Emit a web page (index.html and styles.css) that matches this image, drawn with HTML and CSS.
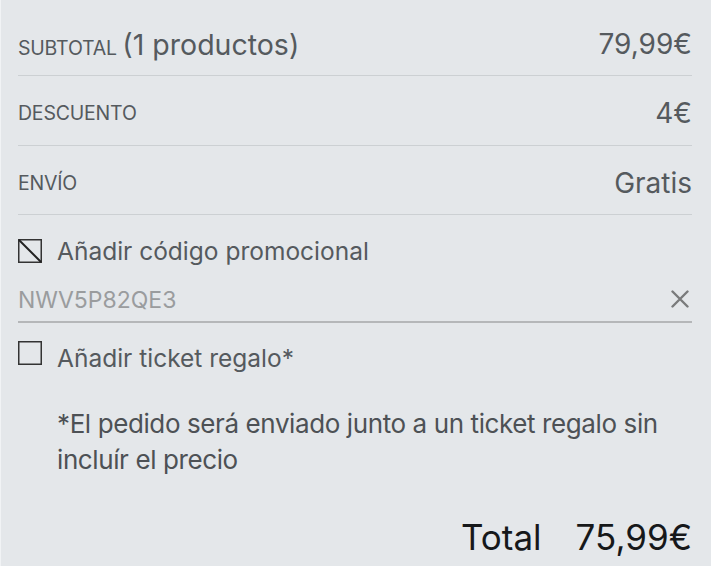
FILE: index.html
```html
<!DOCTYPE html>
<html lang="es">
<head>
<meta charset="utf-8">
<link rel="stylesheet" href="styles.css">
</head>
<body>
<div class="summary">
  <div class="row row-1">
    <span class="label"><span class="caps">SUBTOTAL</span> <span class="count">(1 productos)</span></span>
    <span class="value">79,99€</span>
  </div>
  <div class="row row-2">
    <span class="label"><span class="caps">DESCUENTO</span></span>
    <span class="value">4€</span>
  </div>
  <div class="row row-3">
    <span class="label"><span class="caps">ENVÍO</span></span>
    <span class="value">Gratis</span>
  </div>
  <div class="check check-promo">
    <span class="box">
      <svg width="24" height="24" viewBox="0 0 24 24"><rect x="0.75" y="0.75" width="22.5" height="22.5" fill="none" stroke="#333" stroke-width="1.5"/><line x1="1" y1="1" x2="23" y2="23" stroke="#222" stroke-width="2"/></svg>
    </span>
    <span class="check-text">Añadir código promocional</span>
  </div>
  <div class="promo-input">
    <span class="code">NWV5P82QE3</span>
    <svg class="clear" width="20" height="18" viewBox="0 0 20 18"><path d="M2.5 1.5 L17.5 16.5 M17.5 1.5 L2.5 16.5" stroke="#7a7b7c" stroke-width="2.4" stroke-linecap="round"/></svg>
  </div>
  <div class="check check-ticket">
    <span class="box">
      <svg width="24" height="24" viewBox="0 0 24 24"><rect x="0.75" y="0.75" width="22.5" height="22.5" fill="none" stroke="#333" stroke-width="1.5"/></svg>
    </span>
    <span class="check-text">Añadir ticket regalo*</span>
  </div>
  <p class="note">*El pedido será enviado junto a un ticket regalo sin incluír el precio</p>
  <div class="total">
    <span>Total</span>
    <span>75,99€</span>
  </div>
</div>
</body>
</html>
```

FILE: styles.css
```css
html, body {
  margin: 0;
  padding: 0;
  background: #e4e7ea;
}
body {
  font-family: Inter, "Noto Sans", sans-serif;
  color: #555a5e;
  border-left: 1px solid #f1f3f5;
  min-height: 566px;
  box-sizing: border-box;
}
.summary {
  padding: 0 19px 0 17px;
}
.row {
  display: flex;
  justify-content: space-between;
  align-items: center;
  border-bottom: 1px solid #ccd0d3;
}
.row-1 {
  height: 62px;
  padding-top: 13px;
}
.row-2 {
  height: 64px;
  padding-top: 5px;
}
.row-3 {
  height: 62px;
  padding-top: 6px;
}
.caps {
  font-size: 19.5px;
  letter-spacing: -0.2px;
}
.row .count {
  font-size: 28.5px;
  margin-left: 1px;
}
.value {
  font-size: 28px;
}
.check {
  display: flex;
  align-items: center;
  gap: 15px;
  height: 26px;
}
.box {
  display: flex;
  width: 24px;
  height: 24px;
}
.check-text {
  font-size: 24.5px;
}
.check-promo {
  margin-top: 23px;
}
.promo-input {
  display: flex;
  justify-content: space-between;
  align-items: center;
  margin-top: 14px;
  height: 36px;
  padding-top: 4px;
  padding-bottom: 3px;
  border-bottom: 2px solid #b5b7b9;
}
.code {
  font-size: 23px;
  color: #9a9c9e;
}
.clear {
  margin-right: 2px;
  margin-bottom: 3px;
}
.check-ticket {
  margin-top: 17px;
}
.check-ticket .check-text {
  margin-top: 9px;
}
.note {
  margin: 40px 0 0 39px;
  font-size: 26px;
  line-height: 36px;
  color: #4d5155;
  letter-spacing: -0.4px;
}
.total {
  display: flex;
  justify-content: flex-end;
  align-items: center;
  gap: 34px;
  margin-top: 37px;
  height: 44px;
  font-size: 35px;
  color: #16181a;
}
```
